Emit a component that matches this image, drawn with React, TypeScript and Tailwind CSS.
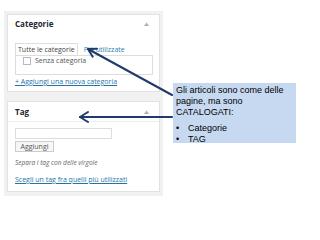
import React from "react";

const os = { fontFamily: '"Open Sans", "Noto Sans", sans-serif' };
const ar = { fontFamily: '"Liberation Sans", Arial, sans-serif' };

function Triangle() {
  return (
    <svg width="5" height="4" viewBox="0 0 5 4" className="block">
      <path d="M0 4 L2.5 0.5 L5 4 Z" fill="#b0b0b0" />
    </svg>
  );
}

export default function App() {
  return (
    <div className="relative w-[320px] h-[240px] bg-white overflow-hidden" style={os}>
      <div className="flex">
        {/* left WP column */}
        <div className="ml-[4px] mt-[11px] w-[159px] h-[185px] bg-[#f1f1f1] px-[3px] pt-[3px] flex flex-col">
          {/* Categorie panel */}
          <div className="h-[78px] bg-white border border-[#e2e2e2] flex flex-col">
            <div className="h-[18px] flex items-center justify-between pl-[7px] pr-[10px]">
              <span className="text-[8px] font-bold text-[#23282d] leading-none">Categorie</span>
              <Triangle />
            </div>
            <div className="mt-[10px] pl-[7px] flex items-end h-[12px]">
              <div className="h-[12px] border border-b-0 border-[#dddddd] bg-white px-[2px] flex items-center text-[7px] text-[#444] leading-none">
                Tutte le categorie
              </div>
              <div className="ml-[6px] h-[12px] flex items-center text-[7px] text-[#2a7fb5] leading-none">
                Più utilizzate
              </div>
            </div>
            <div className="ml-[7px] mr-[6px] h-[20px] border border-[#dddddd] bg-white flex items-start pt-[1px] pl-[7px]">
              <div className="w-[8px] h-[8px] border border-[#b4b9be] bg-white" />
              <span className="ml-[4px] text-[7px] text-[#555] leading-[8px]">Senza categoria</span>
            </div>
            <div className="mt-[3px] pl-[7px] text-[7px] leading-[8px] text-[#1f74a8] underline">
              + Aggiungi una nuova categoria
            </div>
          </div>
          {/* Tag panel */}
          <div className="mt-[9px] h-[91px] bg-white border border-[#e2e2e2] flex flex-col">
            <div className="h-[20px] flex items-center justify-between pl-[7px] pr-[10px] border-b border-[#eeeeee]">
              <span className="text-[8px] font-bold text-[#23282d] leading-none">Tag</span>
              <Triangle />
            </div>
            <div className="mt-[6px] ml-[7px] w-[97px] h-[11px] border border-[#dddddd] bg-white" />
            <div className="mt-[2px] ml-[7px] w-[39px] h-[11px] border border-[#cccccc] bg-[#f7f7f7] flex items-center justify-center text-[7px] text-[#555] leading-none">
              Aggiungi
            </div>
            <div className="mt-[7px] pl-[7px] text-[6.5px] italic text-[#666] leading-[8px]">
              Separa i tag con delle virgole
            </div>
            <div className="mt-[9px] pl-[7px] text-[7px] text-[#1f74a8] underline leading-[8px]">
              Scegli un tag fra quelli più utilizzati
            </div>
          </div>
        </div>
        {/* callout */}
        <div
          className="ml-[10px] mt-[83px] w-[123px] h-[60px] bg-[#c6d9f1] pl-[3px] pt-[2px] text-[9px] leading-[11px] text-black"
          style={ar}
        >
          <div>Gli articoli sono come delle</div>
          <div>pagine, ma sono</div>
          <div>CATALOGATI:</div>
          <div className="mt-[5px] flex">
            <span className="w-[12px]">•</span>
            <span>Categorie</span>
          </div>
          <div className="flex">
            <span className="w-[12px]">•</span>
            <span>TAG</span>
          </div>
        </div>
      </div>
      {/* arrows */}
      <svg className="absolute left-0 top-0 pointer-events-none" width="320" height="240" viewBox="0 0 320 240">
        <g stroke="#1f3a6b" strokeWidth="2" fill="none" strokeLinecap="round" strokeLinejoin="round">
          <path d="M172 95 L88 49" />
          <path d="M92.7 56.7 L88 49 L97 48.8" />
          <path d="M172 117 L80 117" />
          <path d="M88 112 L80 117 L88 122" />
        </g>
      </svg>
    </div>
  );
}
